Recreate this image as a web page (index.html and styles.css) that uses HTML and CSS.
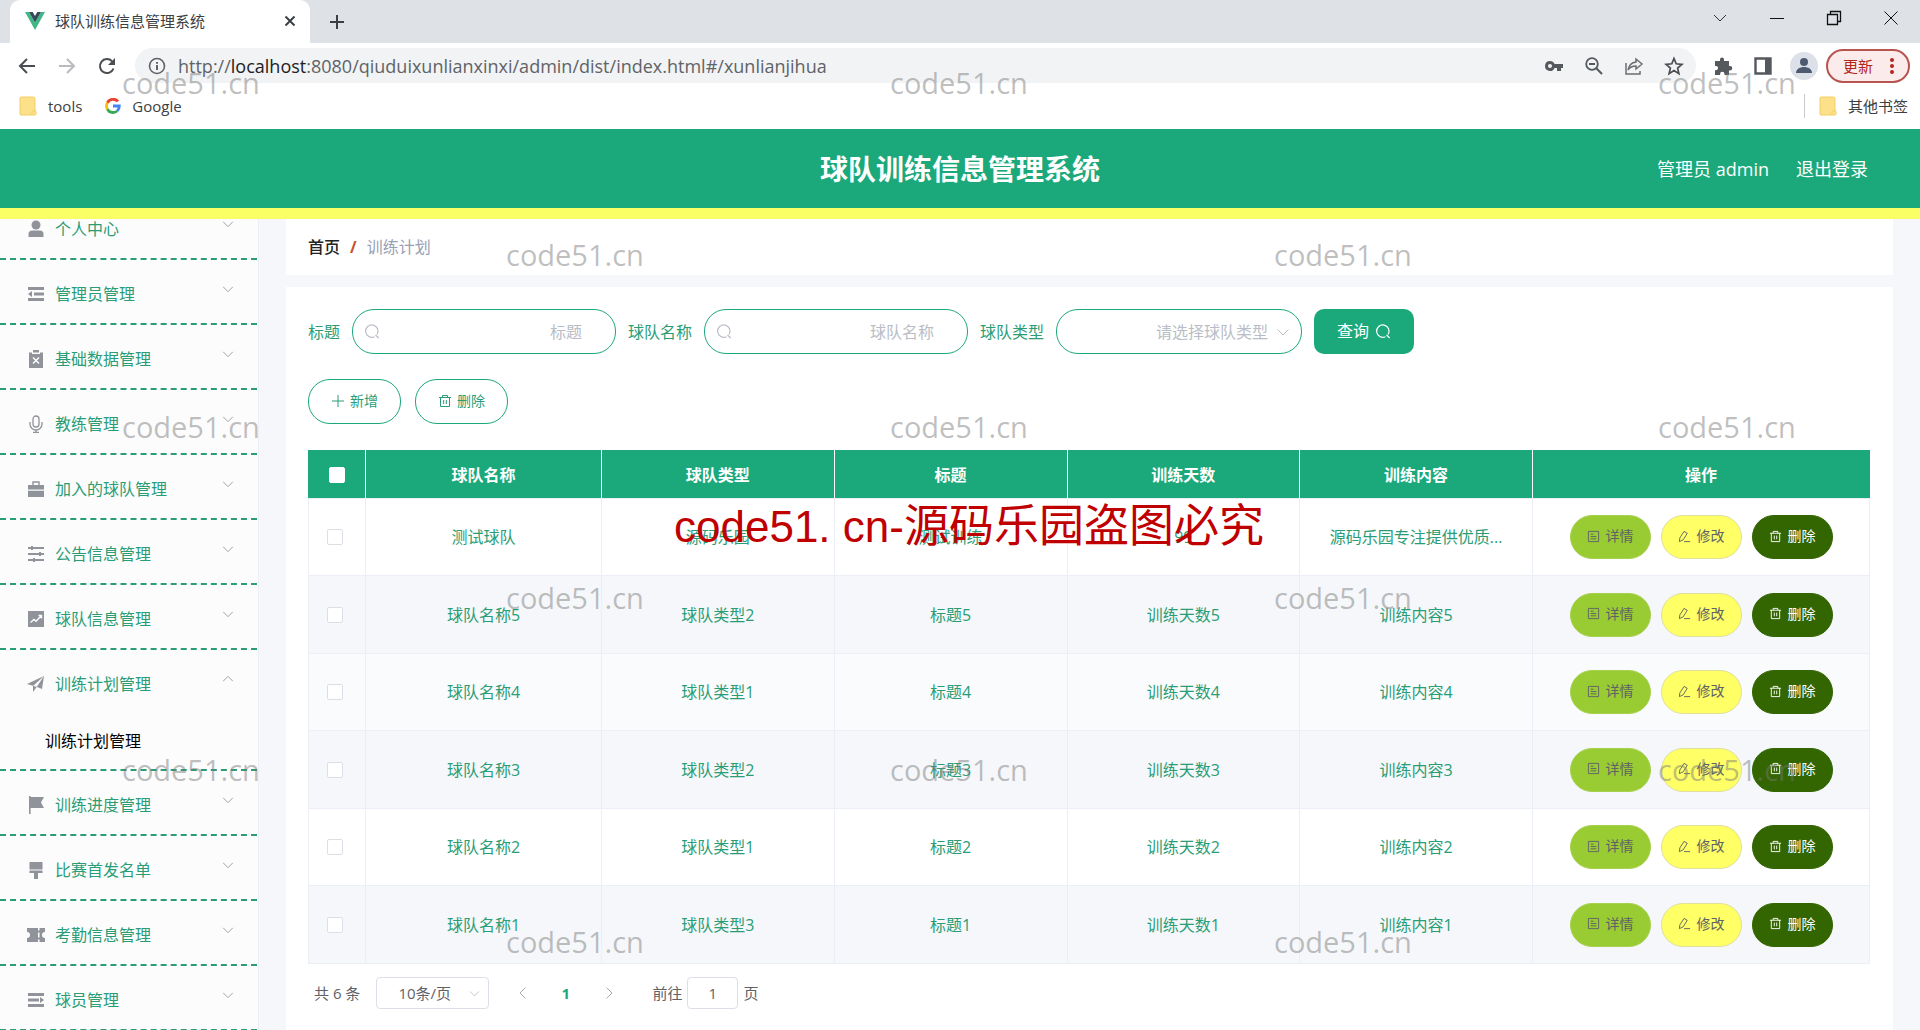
FILE: index.html
```html
<!DOCTYPE html>
<html lang="zh-CN">
<head>
<meta charset="utf-8">
<title>球队训练信息管理系统</title>
<link rel="stylesheet" href="styles.css">
</head>
<body>
<svg class="sprite" aria-hidden="true">
  <symbol id="i-down" viewBox="0 0 16 16"><path d="M2.500 5.500l5.500 5.500 5.500-5.500" fill="none" stroke="currentColor"/></symbol>
  <symbol id="i-search" viewBox="0 0 16 16"><path d="M10.500 13.700A6.200 6.200 0 1 1 13 11.500M11.500 12l3.200 3" fill="none" stroke="currentColor" stroke-width="1.200"/></symbol>
  <symbol id="i-plus" viewBox="0 0 14 14"><path d="M7 1v12M1 7h12" fill="none" stroke="currentColor"/></symbol>
  <symbol id="i-trash" viewBox="0 0 14 14"><path d="M1 3.500h12M4.500 3.500v-2h5v2M2.500 3.500v9h9v-9M5.700 6v4M8.300 6v4" fill="none" stroke="currentColor"/></symbol>
  <symbol id="i-doc" viewBox="0 0 14 14"><path d="M1.500 1.500h11v11h-11zM4 4.500h3M4 7h6M4 9.500h6" fill="none" stroke="currentColor"/></symbol>
  <symbol id="i-edit" viewBox="0 0 14 14"><path d="M1.500 12.500l.5-4L6.500 1.500l3.500 2-4.500 7.200zM6.500 12.500H13" fill="none" stroke="currentColor"/></symbol>
  <symbol id="i-folder" viewBox="0 0 18 20"><path d="M2 1h12a2 2 0 0 1 2 2v11l1 2v2a1 1 0 0 1-1 1H2a1 1 0 0 1-1-1V2a1 1 0 0 1 1-1z" fill="#fde18a" stroke="#f3cf62"/><path d="M13 18v-3h3" fill="none" stroke="#f3cf62"/></symbol>
</svg>

<div class="tabstrip">
  <div class="tab">
    <svg class="vue" viewBox="0 0 20 18"><path d="M0 0h4l6 10.500L16 0h4L10 18z" fill="#41b883"/><path d="M4 0h3.700L10 4l2.300-4H16l-6 10.500z" fill="#35495e"/></svg>
    <span class="tab-title">球队训练信息管理系统</span>
    <button class="plain tab-close" aria-label="关闭标签页"><svg width="12" height="12" viewBox="0 0 12 12"><path d="M1.500 1.500l9 9M10.500 1.500l-9 9" stroke="#3c4043" stroke-width="2"/></svg></button>
  </div>
  <button class="plain new-tab" aria-label="新标签页"><svg width="16" height="16" viewBox="0 0 16 16"><path d="M8 1v14M1 8h14" stroke="#3c4043" stroke-width="2"/></svg></button>
  <div class="window-controls">
    <button class="plain" aria-label="搜索标签页"><svg width="16" height="16" viewBox="0 0 16 16"><path d="M2 5l6 6 6-6" fill="none" stroke="#333"/></svg></button>
    <button class="plain" aria-label="最小化"><svg width="16" height="16" viewBox="0 0 16 16"><path d="M1 8.500h14" stroke="#111"/></svg></button>
    <button class="plain" aria-label="还原"><svg width="16" height="16" viewBox="0 0 16 16"><path d="M1.500 4.500h10v10h-10zM4.500 4V1.500h10v10H12" fill="none" stroke="#111" stroke-width="1.300"/></svg></button>
    <button class="plain" aria-label="关闭"><svg width="16" height="16" viewBox="0 0 16 16"><path d="M1.500 1.500l13 13M14.500 1.500l-13 13" stroke="#111"/></svg></button>
  </div>
</div>

<div class="toolbar">
  <div class="nav-buttons">
    <button class="plain" aria-label="后退"><svg width="18" height="18" viewBox="0 0 18 18"><path d="M17 9H2M9 2L2 9l7 7" fill="none" stroke="#4a4d51" stroke-width="2"/></svg></button>
    <button class="plain" aria-label="前进"><svg width="18" height="18" viewBox="0 0 18 18"><path d="M1 9h15M9 2l7 7-7 7" fill="none" stroke="#b9bbbe" stroke-width="2"/></svg></button>
    <button class="plain" aria-label="重新加载"><svg width="18" height="18" viewBox="0 0 18 18"><path d="M15.500 11.500A7 7 0 1 1 14 4.200" fill="none" stroke="#4a4d51" stroke-width="2"/><path d="M17 1v7h-7z" fill="#4a4d51"/></svg></button>
  </div>
  <div class="omnibox">
    <svg width="18" height="18" viewBox="0 0 18 18"><circle cx="9" cy="9" r="7.500" fill="none" stroke="#5f6368" stroke-width="1.600"/><path d="M9 8v5M9 5v1.800" stroke="#5f6368" stroke-width="2"/></svg>
    <span class="url">http://<b>localhost</b>:8080/qiuduixunlianxinxi/admin/dist/index.html#/xunlianjihua</span>
    <div class="omni-icons">
      <svg width="20" height="20" viewBox="0 0 20 20"><path d="M6 5a5 5 0 1 0 4.600 7H13v3h4v-3h2V8h-8.400A5 5 0 0 0 6 5zm0 3a2 2 0 1 1 0 4 2 2 0 0 1 0-4z" fill="#55585d" fill-rule="evenodd"/></svg>
      <svg width="20" height="20" viewBox="0 0 20 20"><circle cx="8" cy="8" r="5.800" fill="none" stroke="#55585d" stroke-width="1.800"/><path d="M12.300 12.300l5.700 5.700M5 8h6" stroke="#55585d" stroke-width="2"/></svg>
      <svg width="20" height="20" viewBox="0 0 20 20"><path d="M2 7v11h14v-3M12 3l6 5-6 5v-3c-4 0-6 1-8 4 1-5 4-7.500 8-8z" fill="none" stroke="#6b6e72" stroke-width="1.500"/></svg>
      <svg width="20" height="20" viewBox="0 0 20 20"><path d="M10 2.500l2.200 5.300 5.700.5-4.300 3.700 1.300 5.600-4.900-3-4.900 3L6.400 12 2.100 8.300l5.700-.5z" fill="none" stroke="#4a4d51" stroke-width="1.700"/></svg>
    </div>
  </div>
  <div class="browser-tools">
    <svg width="20" height="20" viewBox="0 0 20 20"><path d="M2 5h5V3.500a2 2 0 0 1 4 0V5h5v5h1a2 2 0 0 1 0 4.500h-1V19h-4.500v-1a2.200 2.200 0 0 0-4.400 0v1H2v-4.800h1a2.100 2.100 0 0 0 0-4.200H2z" fill="#55585d"/></svg>
    <svg width="20" height="20" viewBox="0 0 20 20"><path d="M2.500 2.500h15v15h-15z" fill="#fff" stroke="#55585d" stroke-width="2.400"/><path d="M12 2h6v16h-6z" fill="#55585d"/></svg>
    <svg class="avatar" width="28" height="28" viewBox="0 0 28 28"><circle cx="14" cy="14" r="14" fill="#dce0e8"/><circle cx="14" cy="10" r="4" fill="#4d5a70"/><path d="M6 21c0-4 4-6 8-6s8 2 8 6z" fill="#4d5a70"/></svg>
    <button class="update">更新<svg width="6" height="18" viewBox="0 0 6 18"><circle cx="3" cy="3" r="2" fill="#b3261e"/><circle cx="3" cy="9" r="2" fill="#b3261e"/><circle cx="3" cy="15" r="2" fill="#b3261e"/></svg></button>
  </div>
</div>

<nav class="bookmarks" aria-label="书签">
  <a href="#"><svg width="18" height="20"><use href="#i-folder"/></svg>tools</a>
  <a href="#"><svg width="16" height="16" viewBox="0 0 16 16" fill="none" stroke-width="2.800"><path d="M13 3.400A6.500 6.500 0 0 0 2.400 4.800" stroke="#ea4335"/><path d="M2.400 4.800a6.500 6.500 0 0 0 0 6.400" stroke="#fbbc05"/><path d="M2.400 11.200a6.500 6.500 0 0 0 9.800 1.800" stroke="#34a853"/><path d="M12.200 13A6.500 6.500 0 0 0 14.300 8H8" stroke="#4285f4"/></svg>Google</a>
  <a href="#" class="other"><svg width="18" height="20"><use href="#i-folder"/></svg>其他书签</a>
</nav>

<header class="app-header">
  <h1>球队训练信息管理系统</h1>
  <div class="user"><span>管理员 admin</span><a href="#">退出登录</a></div>
</header>

<div class="app-body">
  <aside class="sidebar">
    <ul class="menu">
      <li><a href="#" class="menu-title"><svg class="mi" viewBox="0 0 18 18"><circle cx="9" cy="5" r="4.500"/><path d="M1.500 17v-3c0-2 1.500-3.500 3.500-3.500h8c2 0 3.500 1.500 3.500 3.500v3z"/></svg>个人中心<svg class="arrow"><use href="#i-down"/></svg></a></li>
      <li><a href="#" class="menu-title"><svg class="mi" viewBox="0 0 18 18"><path d="M1 2h16v3H1zM7 7.500h10v3H7zM1 13h16v3H1zM5 6v6L1 9z"/></svg>管理员管理<svg class="arrow"><use href="#i-down"/></svg></a></li>
      <li><a href="#" class="menu-title"><svg class="mi" viewBox="0 0 18 18"><path d="M2 2.500h3V4h8V2.500h3V18H2zM6 0h6v2.500H6z"/><path d="M6 7.500l6 6M12 7.500l-6 6" stroke="#fcfcfc" stroke-width="1.500"/></svg>基础数据管理<svg class="arrow"><use href="#i-down"/></svg></a></li>
      <li><a href="#" class="menu-title"><svg class="mi" viewBox="0 0 18 18"><g fill="none" stroke="#909399" stroke-width="1.300"><rect x="6" y="1" width="6" height="11" rx="3"/><path d="M3 7v2a6 6 0 0 0 12 0V7M9 15v2.500M6 17.300h6"/></g></svg>教练管理<svg class="arrow"><use href="#i-down"/></svg></a></li>
      <li><a href="#" class="menu-title"><svg class="mi" viewBox="0 0 18 18"><path d="M1 5h16v4.500H1zM1 10.700h16V17H1z"/><path d="M6 5V2h6v3" fill="none" stroke="#909399" stroke-width="1.400"/></svg>加入的球队管理<svg class="arrow"><use href="#i-down"/></svg></a></li>
      <li><a href="#" class="menu-title"><svg class="mi" viewBox="0 0 18 18"><path d="M1 2h16v2H1zM1 8h16v2H1zM1 14h16v2H1z"/><path d="M4 1h2v4H4zM12 7h2v4h-2zM6 13h2v4H6z"/></svg>公告信息管理<svg class="arrow"><use href="#i-down"/></svg></a></li>
      <li><a href="#" class="menu-title"><svg class="mi" viewBox="0 0 18 18"><path d="M1 1h16v16H1z"/><path d="M3.500 12.500L7 9.500l2 1.700L14 6M11.500 5.500h3v3" fill="none" stroke="#fcfcfc" stroke-width="1.400"/></svg>球队信息管理<svg class="arrow"><use href="#i-down"/></svg></a></li>
      <li><a href="#" class="menu-title"><svg class="mi" viewBox="0 0 18 18"><path d="M0 9L17 1l-2 13-5-2zM17 1L6 11v6l3-4z"/></svg>训练计划管理<svg class="arrow open"><use href="#i-down"/></svg></a>
        <a href="#" class="submenu">训练计划管理</a></li>
      <li><a href="#" class="menu-title"><svg class="mi" viewBox="0 0 18 18"><path d="M2 0h1.600v18H2zM3.600 1H17l-3 5.500 3 5.500H3.600z"/></svg>训练进度管理<svg class="arrow"><use href="#i-down"/></svg></a></li>
      <li><a href="#" class="menu-title"><svg class="mi" viewBox="0 0 18 18"><path d="M2.500 1h13v7.500h-13zM2.500 9.500h13V12H11v6H7v-6H2.500z"/></svg>比赛首发名单<svg class="arrow"><use href="#i-down"/></svg></a></li>
      <li><a href="#" class="menu-title"><svg class="mi" viewBox="0 0 18 18"><path d="M0 2h11v2.500h1.500V2H18v4a3 3 0 0 0 0 6v4h-5.500v-2.500H11V16H0v-4a3 3 0 0 0 0-6zM11 6.500v5h1.500v-5z" fill-rule="evenodd"/></svg>考勤信息管理<svg class="arrow"><use href="#i-down"/></svg></a></li>
      <li><a href="#" class="menu-title"><svg class="mi" viewBox="0 0 18 18"><path d="M1 2h16v3H1zM1 7.500h11v3H1zM1 13h16v3H1zM13 6v6l4-3z"/></svg>球员管理<svg class="arrow"><use href="#i-down"/></svg></a></li>
    </ul>
  </aside>

  <main class="main">
    <nav class="breadcrumb" aria-label="面包屑"><a href="#">首页</a><i>/</i><span>训练计划</span></nav>

    <section class="panel">
      <form class="filters">
        <label for="f-title">标题</label>
        <div class="field"><svg class="lead"><use href="#i-search"/></svg><input id="f-title" type="text" placeholder="标题"></div>
        <label for="f-name">球队名称</label>
        <div class="field"><svg class="lead"><use href="#i-search"/></svg><input id="f-name" type="text" placeholder="球队名称"></div>
        <label for="f-type">球队类型</label>
        <div class="field narrow"><select id="f-type"><option>请选择球队类型</option></select><svg class="trail"><use href="#i-down"/></svg></div>
        <button type="button" class="query">查询<svg width="16" height="16"><use href="#i-search"/></svg></button>
      </form>

      <div class="actions">
        <button class="outline"><svg width="14" height="14"><use href="#i-plus"/></svg>新增</button>
        <button class="outline"><svg width="14" height="14"><use href="#i-trash"/></svg>删除</button>
      </div>

      <table class="grid">
        <colgroup><col class="c-check"><col class="c-name"><col><col><col><col><col class="c-ops"></colgroup>
        <thead><tr><th><input type="checkbox" aria-label="全选"></th><th>球队名称</th><th>球队类型</th><th>标题</th><th>训练天数</th><th>训练内容</th><th>操作</th></tr></thead>
        <tbody>
          <tr><td><input type="checkbox" aria-label="选择"></td><td>测试球队</td><td>源码乐园</td><td>测试训练</td><td>99</td><td>源码乐园专注提供优质...</td><td><div class="ops"><button class="op view"><svg><use href="#i-doc"/></svg>详情</button><button class="op edit"><svg><use href="#i-edit"/></svg>修改</button><button class="op del"><svg><use href="#i-trash"/></svg>删除</button></div></td></tr>
          <tr><td><input type="checkbox" aria-label="选择"></td><td>球队名称5</td><td>球队类型2</td><td>标题5</td><td>训练天数5</td><td>训练内容5</td><td><div class="ops"><button class="op view"><svg><use href="#i-doc"/></svg>详情</button><button class="op edit"><svg><use href="#i-edit"/></svg>修改</button><button class="op del"><svg><use href="#i-trash"/></svg>删除</button></div></td></tr>
          <tr class="hover"><td><input type="checkbox" aria-label="选择"></td><td>球队名称4</td><td>球队类型1</td><td>标题4</td><td>训练天数4</td><td>训练内容4</td><td><div class="ops"><button class="op view"><svg><use href="#i-doc"/></svg>详情</button><button class="op edit"><svg><use href="#i-edit"/></svg>修改</button><button class="op del"><svg><use href="#i-trash"/></svg>删除</button></div></td></tr>
          <tr><td><input type="checkbox" aria-label="选择"></td><td>球队名称3</td><td>球队类型2</td><td>标题3</td><td>训练天数3</td><td>训练内容3</td><td><div class="ops"><button class="op view"><svg><use href="#i-doc"/></svg>详情</button><button class="op edit"><svg><use href="#i-edit"/></svg>修改</button><button class="op del"><svg><use href="#i-trash"/></svg>删除</button></div></td></tr>
          <tr><td><input type="checkbox" aria-label="选择"></td><td>球队名称2</td><td>球队类型1</td><td>标题2</td><td>训练天数2</td><td>训练内容2</td><td><div class="ops"><button class="op view"><svg><use href="#i-doc"/></svg>详情</button><button class="op edit"><svg><use href="#i-edit"/></svg>修改</button><button class="op del"><svg><use href="#i-trash"/></svg>删除</button></div></td></tr>
          <tr><td><input type="checkbox" aria-label="选择"></td><td>球队名称1</td><td>球队类型3</td><td>标题1</td><td>训练天数1</td><td>训练内容1</td><td><div class="ops"><button class="op view"><svg><use href="#i-doc"/></svg>详情</button><button class="op edit"><svg><use href="#i-edit"/></svg>修改</button><button class="op del"><svg><use href="#i-trash"/></svg>删除</button></div></td></tr>
        </tbody>
      </table>

      <div class="pagination">
        <span>共 6 条</span>
        <div class="page-size"><select aria-label="每页条数"><option>10条/页</option></select><svg class="trail"><use href="#i-down"/></svg></div>
        <div class="pager">
          <button class="plain" aria-label="上一页"><svg class="prev"><use href="#i-down"/></svg></button>
          <button class="plain current">1</button>
          <button class="plain" aria-label="下一页"><svg class="next"><use href="#i-down"/></svg></button>
        </div>
        <label for="jump">前往</label><input id="jump" type="text" value="1"><span>页</span>
      </div>
    </section>
  </main>
</div>

<div class="watermarks" aria-hidden="true">
  <div><span>code51.cn</span><span>code51.cn</span><span>code51.cn</span></div>
  <div class="shift"><span>code51.cn</span><span>code51.cn</span></div>
  <div><span>code51.cn</span><span>code51.cn</span><span>code51.cn</span></div>
  <div class="shift"><span>code51.cn</span><span>code51.cn</span></div>
  <div><span>code51.cn</span><span>code51.cn</span><span>code51.cn</span></div>
  <div class="shift"><span>code51.cn</span><span>code51.cn</span></div>
</div>
<div class="notice"><span class="latin">code51. cn-</span>源码乐园盗图必究</div>
</body>
</html>
```
FILE: styles.css
```css
:root {
  --green: #1ba97b;
  --text-green: #2a9d76;
  --line: #ebeef5;
  --page: #f5f7fa;
}
* { box-sizing: border-box; }
body {
  margin: 0;
  height: 100vh;
  overflow: hidden;
  display: flex;
  flex-direction: column;
  position: relative;
  font: 16px/24px "Open Sans", "Noto Sans CJK SC", sans-serif;
  color: #606266;
  background: #fff;
}
button, input, select { font: inherit; color: inherit; margin: 0; }
a { color: inherit; text-decoration: none; }
svg { flex: none; display: block; }
.sprite { position: absolute; width: 0; height: 0; }
.plain { border: 0; padding: 0; background: none; display: grid; place-items: center; }

/* Browser window */
.tabstrip { flex: none; display: flex; height: 43px; padding-left: 10px; background: #dee1e6; }
.tab {
  width: 300px; display: flex; align-items: center; padding: 0 14px 2px 15px;
  background: #fff; border-radius: 10px 10px 0 0; font-size: 15px; color: #3c4043;
}
.vue { width: 20px; height: 18px; margin-right: 10px; }
.tab-title { flex: 1; }
.new-tab { width: 54px; }
.window-controls { display: flex; margin-left: auto; padding-right: 21px; height: 36px; gap: 41px; }
.toolbar { flex: none; display: flex; align-items: center; height: 45px; padding: 0 10px 0 18px; }
.nav-buttons { display: flex; gap: 22px; width: 117px; }
.omnibox {
  flex: 1; display: flex; align-items: center; height: 35px; padding: 0 12px 0 13px;
  border-radius: 18px; background: #f1f3f4;
}
.url { margin-left: 12px; font-size: 18px; color: #5f6368; }
.url b { font-weight: 400; color: #202124; }
.omni-icons { display: flex; gap: 20px; margin-left: auto; }
.browser-tools { display: flex; align-items: center; gap: 20px; padding-left: 17px; }
.avatar { margin: 0 -12px 0 -3px; }
.update {
  display: flex; align-items: center; justify-content: space-between; width: 84px; height: 34px;
  padding: 0 13px 0 15px; border: 2px solid #b85450; border-radius: 17px;
  background: #fbeceb; color: #b3261e; font-size: 15px;
}
.bookmarks { flex: none; display: flex; align-items: center; gap: 23px; height: 41px; padding: 0 12px 5px 19px; font-size: 15px; color: #3c4043; }
.bookmarks a { display: flex; align-items: center; gap: 11px; }
.bookmarks .other { margin-left: auto; padding-left: 14px; border-left: 1px solid #ccc; }

/* Application header */
.app-header {
  flex: none; display: grid; grid-template-columns: 1fr auto 1fr; align-items: center;
  height: 90px; padding: 0 52px; background: var(--green); border-bottom: 11px solid #fbff66; color: #fff;
}
.app-header h1 { grid-column: 2; margin: 0; font-size: 28px; line-height: 40px; }
.user { display: flex; justify-content: flex-end; gap: 27px; font-size: 18px; }
.app-body { flex: 1; min-height: 0; display: flex; background: var(--page); }

/* Side menu */
.sidebar { flex: none; width: 259px; overflow: hidden; background: #fcfcfc; border-right: 1px solid #eceff4; }
.menu { margin: -24px 1px 0 0; padding: 0; list-style: none; }
.menu li { border-bottom: 2px dashed var(--text-green); }
.menu-title { display: flex; align-items: center; height: 63px; padding: 4px 20px 0 27px; color: var(--text-green); }
.mi { width: 18px; height: 18px; margin-right: 10px; fill: #909399; }
.arrow { width: 14px; height: 14px; margin: 0 2px 10px auto; color: #909399; }
.arrow.open { transform: rotate(180deg); }
.submenu { display: block; height: 56px; padding: 16px 0 0 45px; color: #000; }

/* Content */
.main { flex: 1; min-width: 0; display: flex; flex-direction: column; gap: 12px; padding: 0 27px; }
.breadcrumb { flex: none; display: flex; align-items: center; gap: 10px; height: 56px; padding: 0 22px; background: #fff; }
.breadcrumb a { color: #222; font-weight: 500; }
.breadcrumb i { color: #c8502e; font-weight: 700; font-style: normal; }
.breadcrumb span { color: #97a0b5; }
.panel { flex: 1; padding: 22px 23px 0 22px; background: #fff; }
.filters { display: flex; align-items: center; color: var(--text-green); }
.field { position: relative; width: 264px; margin: 0 12px; }
.field.narrow { width: 246px; }
.field input, .field select {
  width: 100%; height: 45px; padding: 0 33px; border: 1px solid var(--green); border-radius: 22px;
  background: #fff; text-align: right; color: #606266; outline: 0; display: block;
}
.field select { appearance: none; text-align-last: right; color: #b9bdc6; }
.field input::placeholder { color: #b9bdc6; }
.lead, .trail { position: absolute; width: 16px; height: 16px; color: #b9bdc6; pointer-events: none; }
.lead { left: 12px; top: 14px; }
.trail { right: 11px; top: 15px; }
.query {
  display: flex; align-items: center; justify-content: center; gap: 6px; width: 100px; height: 45px; padding: 0 0 2px;
  border: 0; border-radius: 10px; background: var(--green); color: #fff;
}
.actions { display: flex; gap: 14px; margin: 25px 0 26px; }
.outline {
  display: flex; align-items: center; justify-content: center; gap: 5px; width: 93px; height: 45px; padding: 0 0 2px;
  border: 1px solid var(--green); border-radius: 22px; background: #fff; color: var(--text-green); font-size: 14px;
}

.grid { width: 100%; table-layout: fixed; border-collapse: collapse; text-align: center; color: var(--text-green); }
.c-check { width: 57px; }
.c-name { width: 236px; }
.c-ops { width: 337px; }
.grid th, .grid td { padding: 0; border: 1px solid var(--line); }
.grid th { height: 48px; background: var(--green); color: #fff; border-color: var(--green) #fff var(--line) #fff; }
.grid th:first-child { border-left-color: var(--green); }
.grid th:last-child { border-right-color: var(--green); }
.grid td { height: 77px; }
.grid tbody tr:nth-child(even) td { height: 78px; background: var(--page); }
.grid .hover td { background: #fafbfd; }
.grid input {
  appearance: none; display: block; width: 16px; height: 16px; margin: 0 auto 0 18px;
  border: 1px solid #dcdfe6; border-radius: 2px; background: #fff;
}
.grid th input { margin-left: 20px; border-color: #fff; }
.ops { display: flex; justify-content: center; gap: 10px; }
.op {
  display: flex; align-items: center; justify-content: center; gap: 6px; width: 81px; height: 44px; padding: 0 0 2px;
  border: 1px solid #dcdfe6; border-radius: 22px; font-size: 14px; color: #606266;
}
.op svg { width: 13px; height: 13px; }
.view { background: #9c3; border-color: #a8d04f; }
.edit { background: #ff6; border-color: #dfe09a; }
.del { background: #360; border-color: #360; color: #fff; }

.pagination { display: flex; align-items: center; margin-top: 13px; padding-left: 6px; font-size: 15px; }
.pagination input, .page-size select { height: 32px; border: 1px solid #dcdfe6; border-radius: 4px; background: #fff; }
.page-size { position: relative; width: 113px; margin: 0 12px 0 16px; }
.page-size select { display: block; width: 100%; padding: 0 28px 0 21px; appearance: none; }
.page-size .trail { top: 10px; width: 13px; height: 13px; right: 8px; }
.pager { display: flex; color: #a8abb2; }
.pager button { width: 43px; }
.pager svg { width: 16px; height: 16px; }
.prev { transform: rotate(90deg); }
.next { transform: rotate(-90deg); }
.pager .current { color: var(--green); font-weight: 700; }
.pagination label { margin: 0 5px 0 22px; }
.pagination input { width: 51px; margin-right: 5px; text-align: center; }

/* Overlaid marks */
.watermarks { position: absolute; inset: 0; display: grid; grid-template-rows: repeat(6, 1fr); pointer-events: none; }
.watermarks div { display: flex; align-items: center; padding: 0 0 5px 122px; font-size: 29px; line-height: 40px; color: rgba(120, 120, 120, .48); }
.watermarks span { flex: none; width: 40vw; }
.watermarks div span:last-child { width: auto; }
.watermarks .shift { padding-left: calc(122px + 20vw); }
.notice {
  position: absolute; left: 0; right: 0; top: 490px; padding-left: 18px; text-align: center; pointer-events: none;
  font: 45px/66px "Noto Sans CJK SC", sans-serif; color: #c00000; white-space: nowrap;
}
.latin { font-family: "Liberation Sans", sans-serif; font-size: 44px; }
```
